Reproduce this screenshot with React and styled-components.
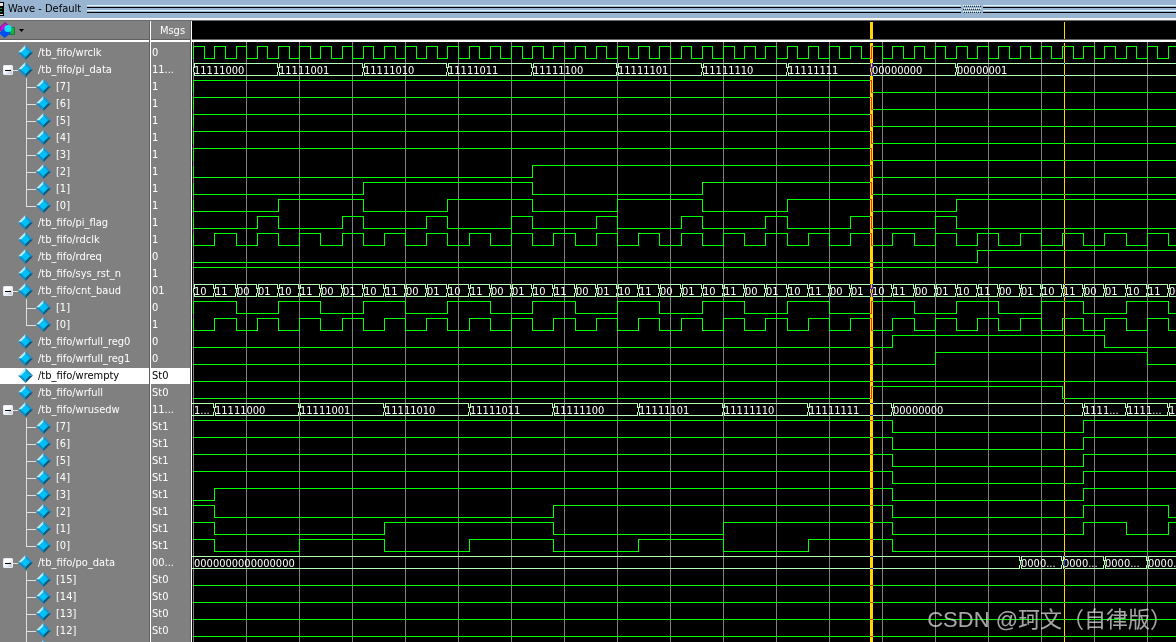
import styled, { createGlobalStyle } from "styled-components";

const ROW = 17;
const TICKS = 140;
const FAR = 3000;

const range = (from, to, step = 1) => {
  const list = [];
  for (let i = from; i < to; i += step) list.push(i);
  return list;
};

// "start" is the level at tick 0, "flips" are the ticks where the level changes
const line = (start, flips = [], edge = false) => ({ start, flips, edge });

const bus = (items, openStart = false) => ({ items, openStart });

const bits = (count, msg, waves) =>
  waves.map((wave, i) => ({
    name: `[${count - 1 - i}]`,
    msg,
    wave,
    child: true,
    last: i === count - 1,
  }));

const counter = ["10", "11", "00", "01"];
const usedHigh = line(1, [33, 42]);

const signals = [
  { name: "/tb_fifo/wrclk", msg: "0", wave: line(1, range(0.5, TICKS, 0.5), true) },
  {
    name: "/tb_fifo/pi_data",
    msg: "11...",
    group: true,
    bus: bus([
      [0, "11111000"],
      [4, "11111001"],
      [8, "11111010"],
      [12, "11111011"],
      [16, "11111100"],
      [20, "11111101"],
      [24, "11111110"],
      [28, "11111111"],
      [32, "00000000"],
      [36, "00000001"],
    ]),
  },
  ...bits(8, "1", [
    line(1, [32], true),
    line(1, [32], true),
    line(1, [32], true),
    line(1, [32], true),
    line(1, [32], true),
    line(0, [16, 32], true),
    line(0, [8, 16, 24, 32], true),
    line(0, [4, 8, 12, 16, 20, 24, 28, 32, 36], true),
  ]),
  {
    name: "/tb_fifo/pi_flag",
    msg: "1",
    wave: line(0, range(3, 36, 4).flatMap((t) => [t, t + 1]), true),
  },
  { name: "/tb_fifo/rdclk", msg: "1", wave: line(0, range(1, TICKS), true) },
  { name: "/tb_fifo/rdreq", msg: "0", wave: line(0, [37]) },
  { name: "/tb_fifo/sys_rst_n", msg: "1", wave: line(1) },
  {
    name: "/tb_fifo/cnt_baud",
    msg: "01",
    group: true,
    bus: bus(range(0, 47).map((t) => [t, counter[t % 4]])),
  },
  { name: "[1]", msg: "0", child: true, wave: line(1, range(2, TICKS, 2), true) },
  { name: "[0]", msg: "1", child: true, last: true, wave: line(0, range(1, TICKS), true) },
  { name: "/tb_fifo/wrfull_reg0", msg: "0", wave: line(0, [33, 43]) },
  { name: "/tb_fifo/wrfull_reg1", msg: "0", wave: line(0, [35, 45]) },
  { name: "/tb_fifo/wrempty", msg: "St0", selected: true, wave: line(0) },
  { name: "/tb_fifo/wrfull", msg: "St0", wave: line(0, [32, 41]) },
  {
    name: "/tb_fifo/wrusedw",
    msg: "11...",
    group: true,
    bus: bus(
      [
        [0, "1..."],
        [1, "11111000"],
        [5, "11111001"],
        [9, "11111010"],
        [13, "11111011"],
        [17, "11111100"],
        [21, "11111101"],
        [25, "11111110"],
        [29, "11111111"],
        [33, "00000000"],
        [42, "1111..."],
        [44, "1111..."],
        [46, "1111..."],
      ],
      true
    ),
  },
  ...bits(8, "St1", [
    usedHigh,
    usedHigh,
    usedHigh,
    usedHigh,
    line(0, [1, 33, 42]),
    line(1, [1, 17, 33, 42, 46]),
    line(1, [1, 9, 17, 25, 33, 42, 44, 46]),
    line(1, [1, 5, 9, 13, 17, 21, 25, 29, 33]),
  ]),
  {
    name: "/tb_fifo/po_data",
    msg: "00...",
    group: true,
    bus: bus(
      [
        [0, "0000000000000000"],
        [39, "0000..."],
        [41, "0000..."],
        [43, "0000..."],
        [45, "0000..."],
      ],
      true
    ),
  },
  ...bits(16, "St0", [line(0), line(0), line(0), line(0), line(0)]),
];

const tickX = (t) => Math.floor(1.7 + t * 21.19) + 0.5;

const wavePath = ({ start, flips, edge }, y) => {
  const level = (high) => (high ? y : y + 12);
  let high = Boolean(start);
  let d = edge ? `M1.5 ${y}V${y + 12}M1 ${level(high)}` : `M1 ${level(high)}`;
  flips.forEach((t) => {
    d += `H${tickX(t)}V${level(!high)}`;
    high = !high;
  });
  return `${d}H${FAR}`;
};

const busPath = ({ items, openStart }, y) => {
  const b = y + 12;
  return items
    .map(([t], i) => {
      const open = openStart && i === 0;
      const x = open ? 0 : tickX(t);
      const next = items[i + 1];
      const end = next ? tickX(next[0]) : FAR;
      const left = open
        ? ""
        : `M${x + 1} ${y - 0.5}v4.5M${x} ${y + 3.5}v5M${x + 1} ${b + 0.5}v-4.5`;
      const right = next ? `M${end - 1} ${y - 0.5}v4.5M${end - 1} ${b + 0.5}v-4.5` : "";
      const from = open ? 0 : x + 0.5;
      return `M${from} ${y}H${end - 0.5}M${from} ${b}H${end - 0.5}${left}${right}`;
    })
    .join("");
};

const GlobalStyle = createGlobalStyle`
  body {
    margin: 0;
    overflow: hidden;
    background: #000;
  }
  * {
    box-sizing: border-box;
  }
`;

const Window = styled.div`
  position: relative;
  display: flex;
  flex-direction: column;
  height: 100vh;
  overflow: hidden;
  background: #808080;
  color: #fff;
  font-family: "DejaVu Sans Condensed", "DejaVu Sans", sans-serif;
  font-size: 11px;
  line-height: 16px;
`;

const TitleBar = styled.header`
  display: flex;
  flex: none;
  height: 21px;
  background: #99b4d1;
  border-bottom: 1px solid #6b6b6b;
  box-shadow: inset 0 -2px #f4f4f4;
  color: #000;
`;

const Title = styled.h1`
  margin: 0 6px 0 4px;
  font-size: 11px;
  font-weight: normal;
  line-height: 18px;
`;

const Grip = styled.div`
  flex: ${(props) => props.$grow} 1 0;
  height: 8px;
  margin-top: 5px;
  background: linear-gradient(
    #d8f4ff 0 1px,
    #99b4d1 1px 2px,
    #000 2px 3px,
    #99b4d1 3px 5px,
    #d8f4ff 5px 6px,
    #99b4d1 6px 7px,
    #000 7px 8px
  );
`;

const GripDots = styled.svg`
  flex: none;
  margin: 5px 1px 0 2px;
`;

const Panes = styled.main`
  display: flex;
  flex: 1;
  min-height: 0;
`;

const Pane = styled.section`
  display: flex;
  flex-direction: column;
  flex: ${(props) => (props.$width ? `0 0 ${props.$width}` : "1")};
  min-width: 0;
  overflow: hidden;
  background: ${(props) => (props.$dark ? "#000" : "#808080")};
`;

const PaneHead = styled.div`
  display: flex;
  align-items: center;
  justify-content: ${(props) => (props.$center ? "center" : "flex-start")};
  flex: none;
  height: 21px;
  padding-left: ${(props) => (props.$center ? "4px" : "0")};
  border-bottom: 2px solid #fff;
  box-shadow: inset 0 -1px #606060;
`;

const Splitter = styled.div`
  flex: none;
  width: 2px;
  background: #fff;
  border-left: 1px solid #606060;
`;

const List = styled.ul`
  margin: 0;
  padding: 2px 0 0;
  list-style: none;
`;

const Row = styled.li`
  display: flex;
  height: ${ROW}px;
  padding-top: ${(props) => (props.$text ? "1px" : "0")};
  padding-left: ${(props) => (props.$text ? "1px" : "0")};
  white-space: nowrap;
  color: ${(props) => (props.$selected ? "#000" : "#fff")};
  background: ${(props) =>
    props.$selected
      ? "linear-gradient(#fff, #fff) 0 1px / 100% 16px no-repeat"
      : "none"};
`;

const Lead = styled.div`
  display: flex;
  flex: none;
  align-items: center;
  width: ${(props) => (props.$child ? "36px" : "18px")};
  height: ${ROW}px;
`;

const Toggle = styled.button`
  display: grid;
  place-items: center;
  flex: none;
  width: 10px;
  height: 10px;
  margin: 1px 0 0 3px;
  padding: 0;
  border: 1px solid #e8ecf4;
  border-radius: 1px;
  background: linear-gradient(135deg, #fff 40%, #b8c4dc);

  &::before {
    content: "";
    width: 6px;
    height: 1px;
    background: #000;
  }
`;

const Stub = styled.span`
  flex: 1;
  height: 1px;
  margin-top: 1px;
  background: #e0e0e0;
`;

const Name = styled.span`
  margin-left: 5px;
  padding-top: 1px;
`;

const MenuButton = styled.button`
  display: flex;
  align-items: center;
  gap: 4px;
  padding: 0;
  border: 0;
  background: none;
`;

const Strip = styled.svg`
  display: block;
  align-self: flex-start;
  width: 100%;
  height: 18px;
`;

const Plot = styled.svg`
  display: block;
  flex: 1;
  width: 100%;
  min-height: 0;
  isolation: isolate;
`;

const Trace = styled.path`
  fill: none;
  stroke: ${(props) => (props.$bus ? "#b4ffb4" : "#00ff00")};
  shape-rendering: crispEdges;
`;

const BusValue = styled.text`
  fill: #fff;
`;

const Cursor = styled.rect`
  fill: #ffd700;
  mix-blend-mode: difference;
`;

const Watermark = styled.div`
  position: absolute;
  right: 4px;
  bottom: 6px;
  color: rgba(255, 255, 255, 0.65);
  font-family: "Liberation Sans", "Noto Sans CJK SC", sans-serif;
  font-size: 22px;
  line-height: 32px;
  white-space: nowrap;
`;

const Diamond = () => (
  <svg width="15" height="17" viewBox="0 -1 15 17" aria-hidden="true">
    <path d="M7.5 0L0 7.5H4L7.5 4Z" fill="#b4ecfa" />
    <path d="M7.5 0L15 7.5H11L7.5 4Z" fill="#1896d2" />
    <path d="M0 7.5L7.5 15V11L4 7.5Z" fill="#128cc8" />
    <path d="M15 7.5L7.5 15V11L11 7.5Z" fill="#005a82" />
    <path d="M7.5 3L12 7.5L7.5 12L3 7.5Z" fill="#00c0f8" />
  </svg>
);

const Branch = ({ last }) => (
  <svg width="36" height={ROW} aria-hidden="true">
    <rect x="26" y="0" width="1" height={last ? 10 : ROW} fill="#e0e0e0" />
    <rect x="26" y="9" width="10" height="1" fill="#e0e0e0" />
  </svg>
);

const ObjectsIcon = () => (
  <svg width="15" height="17" viewBox="0 0 15 17" aria-hidden="true">
    <path d="M0 5L5 0.5L9 4L4 9L0 8Z" fill="#c814dc" stroke="#500060" strokeWidth="0.5" />
    <rect x="9" y="5.5" width="5.5" height="7" fill="#14b43c" stroke="#006420" strokeWidth="0.6" />
    <path d="M5 6L11 11L4.5 16L-1 11Z" fill="#0050f0" />
    <circle cx="8" cy="6.5" r="3.6" fill="#14e0fa" />
  </svg>
);

const NameRow = ({ signal }) => (
  <Row $selected={signal.selected}>
    <Lead $child={signal.child}>
      {signal.group && (
        <>
          <Toggle type="button" aria-label={`Collapse ${signal.name}`} />
          <Stub />
        </>
      )}
      {signal.child && <Branch last={signal.last} />}
    </Lead>
    <Diamond />
    <Name>{signal.name}</Name>
  </Row>
);

const Cursors = ({ y }) => (
  <>
    <Cursor x="678" y={y} width="3" height="100%" />
    <Cursor x="872" y={y} width="1" height="100%" />
  </>
);

const WavePlot = () => (
  <Plot role="img" aria-label="Waveforms">
    {range(0, 56).map((i) => (
      <rect key={i} x={1 + i * 53} y="0" width="1" height="100%" fill="#808080" />
    ))}
    {signals.map((signal, i) => {
      const y = 4.5 + i * ROW;
      if (!signal.bus) return <Trace key={i} d={wavePath(signal.wave, y)} />;
      return (
        <g key={i}>
          <Trace $bus d={busPath(signal.bus, y)} />
          {signal.bus.items.map(([t, value]) => (
            <BusValue key={t} x={Math.floor(tickX(t)) + 1} y={15 + i * ROW}>
              {value}
            </BusValue>
          ))}
        </g>
      );
    })}
    <Cursors y="1" />
  </Plot>
);

const App = () => {
  return (
    <>
      <GlobalStyle />
      <Window>
        <TitleBar>
          <svg width="4" height="18" aria-hidden="true">
            <rect x="0" y="2" width="4" height="14" fill="#000" />
            <rect x="0" y="3" width="3" height="3" fill="#e8e8e8" />
            <path d="M0 8.5h2M0 11.5h2" stroke="#00a050" />
            <rect x="0" y="14" width="3" height="1" fill="#e8e8e8" />
          </svg>
          <Title>Wave - Default</Title>
          <Grip $grow={874} />
          <GripDots width="19" height="9" aria-hidden="true">
            {range(0, 9).map((i) => (
              <g key={i}>
                {[0, 3, 6].map((y) => (
                  <g key={y}>
                    <rect x={i * 2 + (y === 3 ? 1 : 0)} y={y} width="1" height="1" fill="#fff" />
                    <rect x={i * 2 + (y === 3 ? 0 : 1)} y={y + 1} width="1" height="1" fill="#203040" />
                  </g>
                ))}
              </g>
            ))}
          </GripDots>
          <Grip $grow={193} />
        </TitleBar>
        <Panes>
          <Pane $width="149px">
            <PaneHead>
              <MenuButton type="button" aria-label="Objects">
                <ObjectsIcon />
                <svg width="5" height="3" aria-hidden="true">
                  <path d="M0 0H5L2.5 3Z" fill="#000" />
                </svg>
              </MenuButton>
            </PaneHead>
            <List>
              {signals.map((signal, i) => (
                <NameRow key={i} signal={signal} />
              ))}
            </List>
          </Pane>
          <Splitter />
          <Pane $width="39px">
            <PaneHead $center>Msgs</PaneHead>
            <List>
              {signals.map((signal, i) => (
                <Row key={i} $text $selected={signal.selected}>
                  {signal.msg}
                </Row>
              ))}
            </List>
          </Pane>
          <Splitter />
          <Pane $dark>
            <PaneHead>
              <Strip aria-hidden="true">
                <Cursors y="1" />
              </Strip>
            </PaneHead>
            <WavePlot />
          </Pane>
        </Panes>
        <Watermark>CSDN @珂文（自律版）</Watermark>
      </Window>
    </>
  );
};

export default App;
